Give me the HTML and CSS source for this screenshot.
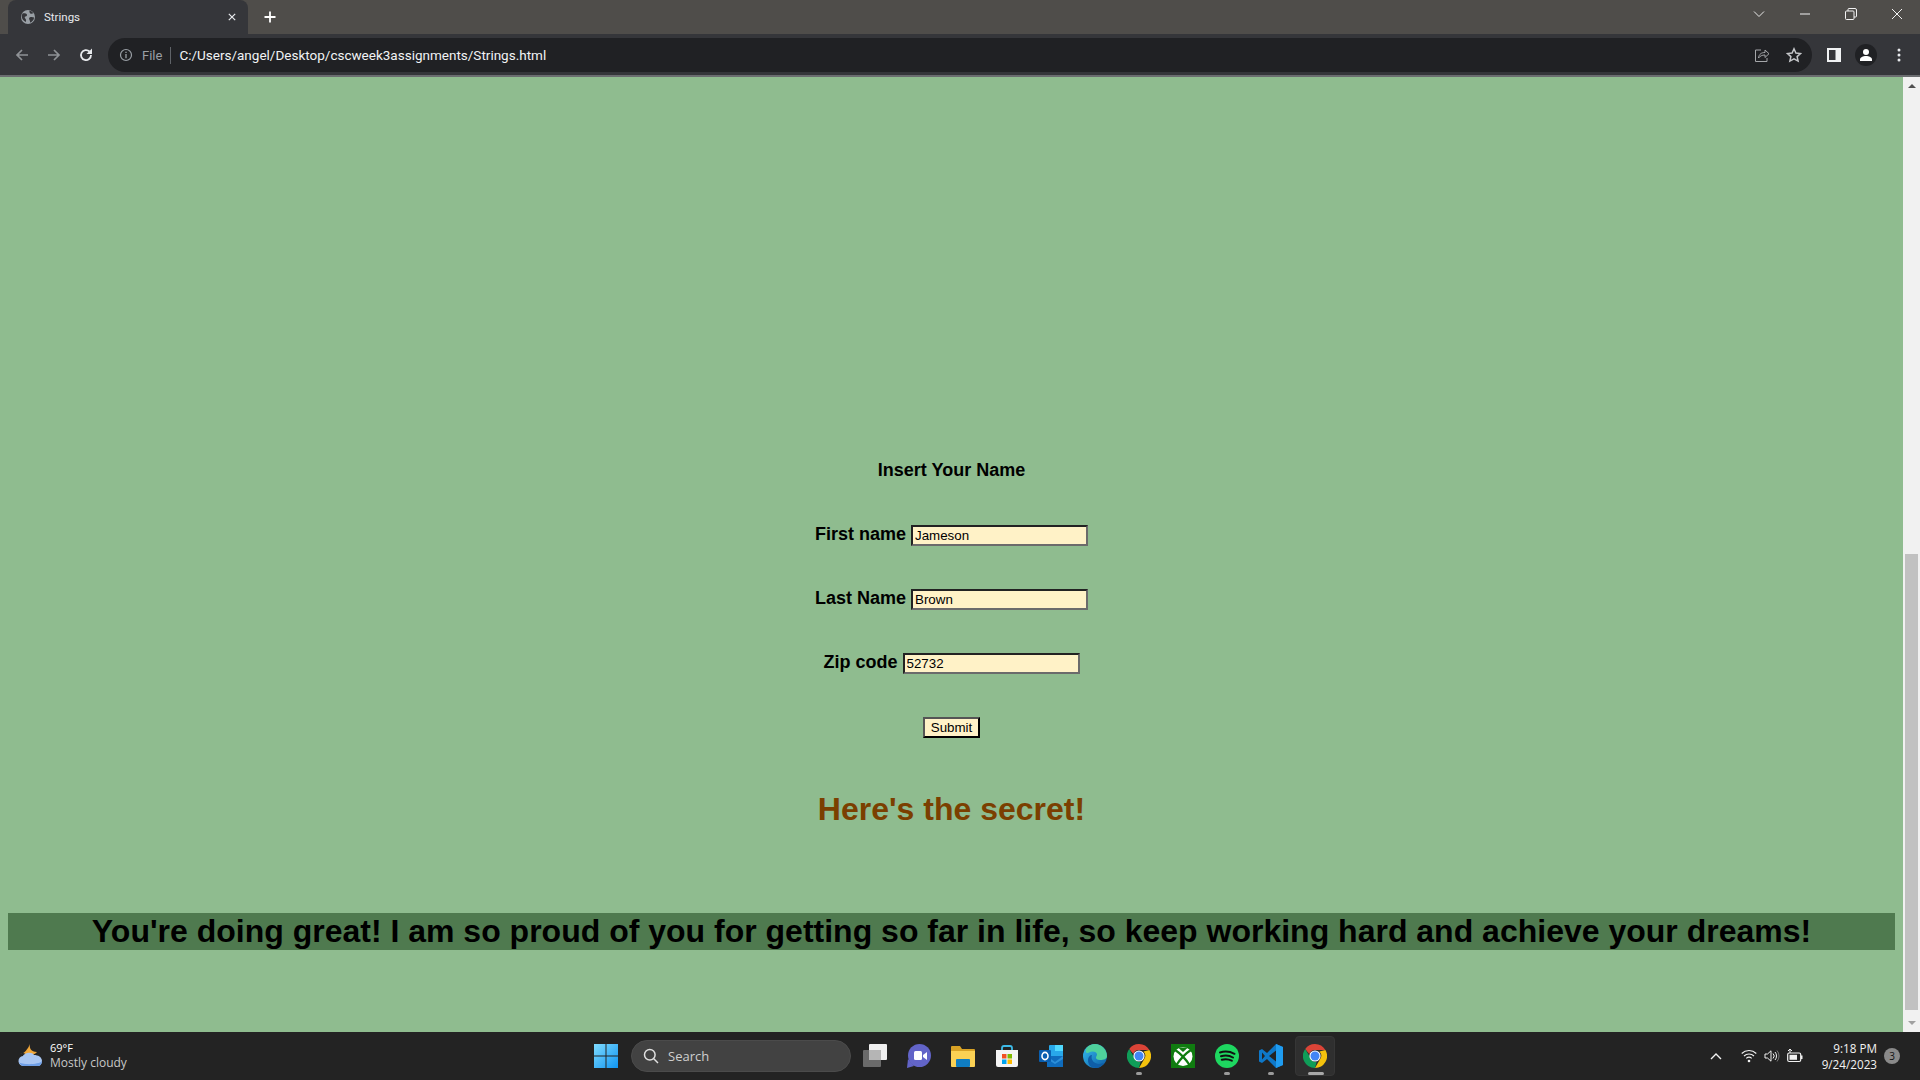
FILE: index.html
```html
<!DOCTYPE html>
<html lang="en">
<head>
<meta charset="utf-8">
<title>Strings</title>
<link rel="stylesheet" href="styles.css">
</head>
<body>
<div class="tabstrip">
  <div class="tab">
    <svg class="favicon" viewBox="0 0 16 16"><circle cx="8" cy="8" r="7" fill="#9aa0a6"/><path d="M2.500 4.500c1.500-.5 3.500-.3 4.300.7.7 1-.2 2-1.300 2.200-1.100.2-.9 1.500-.2 2.200.8.9 1 2 .6 3.300C3.500 12 1.800 10 1.800 7.800c0-1.200.2-2.300.7-3.300zM9.500 1.500c1.700.4 3 1.400 3.800 2.800-.9.500-2.200.6-3 .1-.9-.6-1-1.800-.8-2.900zM9.500 8.500c1.500-.7 3.200-.6 4.600.1-.2 2.300-1.700 4.300-3.900 5.100-.3-1-.2-1.800-.6-2.600-.4-.8-.9-1.800-.1-2.600z" fill="#35363a"/></svg>
    <span class="tab-title">Strings</span>
    <svg class="tab-close" viewBox="0 0 10 10"><path d="M1 1l8 8M9 1l-8 8" stroke="#e8eaed" stroke-width="1.500"/></svg>
  </div>
  <svg class="newtab" viewBox="0 0 12 12"><path d="M6 .5v11M.5 6h11" stroke="#fff" stroke-width="1.800"/></svg>
  <div class="window-controls">
    <svg class="wc wc-chev" viewBox="0 0 12 8"><path d="M1 1.500l5 5 5-5" fill="none" stroke="#e8e8e8" stroke-width="1"/></svg>
    <svg class="wc wc-min" viewBox="0 0 12 2"><path d="M1 1h10" stroke="#f2f2f2" stroke-width="1"/></svg>
    <svg class="wc wc-max" viewBox="0 0 12 12"><path d="M3 3V1.500q0-1 1-1h6q1.500 0 1.500 1.500v6q0 1-1 1H9" fill="none" stroke="#f2f2f2"/><rect x=".5" y="3" width="8.500" height="8.500" rx="1" fill="none" stroke="#f2f2f2"/></svg>
    <svg class="wc wc-close" viewBox="0 0 12 12"><path d="M1 1l10 10M11 1L1 11" stroke="#f2f2f2" stroke-width="1"/></svg>
  </div>
</div>

<div class="toolbar">
  <svg class="nav" viewBox="0 0 16 16"><path d="M14 8H3M8 3L3 8l5 5" fill="none" stroke="#8f9296" stroke-width="1.700"/></svg>
  <svg class="nav" viewBox="0 0 16 16"><path d="M2 8h11M8 3l5 5-5 5" fill="none" stroke="#8f9296" stroke-width="1.700"/></svg>
  <svg class="nav" viewBox="0 0 16 16"><path d="M13 8a5 5 0 1 1-1.500-3.500" fill="none" stroke="#e8eaed" stroke-width="1.800"/><path d="M14 1.500V7H8.500z" fill="#e8eaed"/></svg>
  <div class="omnibox">
    <svg class="info" viewBox="0 0 14 14"><circle cx="7" cy="7" r="5.500" fill="none" stroke="#9aa0a6" stroke-width="1.200"/><path d="M7 6v4.200M7 3.700v1.300" stroke="#9aa0a6" stroke-width="1.300"/></svg>
    <span class="file">File</span>
    <span class="divider"></span>
    <span class="url">C:/Users/angel/Desktop/cscweek3assignments/Strings.html</span>
    <svg class="omni-icon share" viewBox="0 0 16 16"><path d="M7 3H1.500v11.500H13V11" fill="none" stroke="#a5a7aa" stroke-width="1"/><path d="M4.500 11c.5-4 3-5.500 6.500-5.500V3l4 3.700-4 3.800V8c-3 0-5 1-6.500 3z" fill="#202124" stroke="#a5a7aa" stroke-width="1"/></svg>
    <svg class="omni-icon star" viewBox="0 0 16 16"><path d="M8 1.800l1.900 4.200 4.600.5-3.400 3.100 1 4.500L8 11.800l-4.100 2.300 1-4.500L1.500 6.500l4.600-.5z" fill="none" stroke="#c4c6c9" stroke-width="1.500"/></svg>
  </div>
  <svg class="side" viewBox="0 0 14 14"><rect width="14" height="14" fill="#f1f3f4"/><rect x="2" y="2" width="6.500" height="10" fill="#35363a"/></svg>
  <div class="avatar"><svg viewBox="0 0 14 14"><circle cx="7" cy="4" r="3" fill="#fff"/><path d="M1 13v-1.500C1 9.500 4 8 7 8s6 1.500 6 3.500V13z" fill="#fff"/></svg></div>
  <svg class="menu" viewBox="0 0 4 14"><circle cx="2" cy="2" r="1.500" fill="#e8eaed"/><circle cx="2" cy="7" r="1.500" fill="#e8eaed"/><circle cx="2" cy="12" r="1.500" fill="#e8eaed"/></svg>
</div>

<div class="viewport">
  <main class="page">
    <h3 class="form-title">Insert Your Name</h3>
    <form class="name-form">
      <div class="row"><label class="lbl">First name</label> <input class="field" type="text" value="Jameson"></div>
      <div class="row"><label class="lbl">Last Name</label> <input class="field" type="text" value="Brown"></div>
      <div class="row"><label class="lbl">Zip code</label> <input class="field" type="text" value="52732"></div>
      <div class="row"><button class="submit" type="button">Submit</button></div>
    </form>
    <h2 class="secret">Here's the secret!</h2>
    <p class="banner">You're doing great! I am so proud of you for getting so far in life, so keep working hard and achieve your dreams!</p>
  </main>
  <div class="scrollbar">
    <div class="arrow-up"></div>
    <div class="track"><div class="thumb"></div></div>
    <div class="arrow-down"></div>
  </div>
</div>

<footer class="taskbar">
  <div class="weather">
    <svg class="weather-icon" viewBox="0 0 26 26"><path d="M12 1c-1 4 1 8 7 8-2 3-10 5-13 1L2 11c4 0 8-5 10-10z" fill="#f0a73a"/><path d="M6 23a5 5 0 0 1-1-10c1-3 9-5 11-1 4 0 8 2 8 6 0 3-2 5-4 5z" fill="#a9c6f2"/><path d="M1 19c2 3 20 3 23-1 0 3-2 5-4 5H6c-3 0-4-2-5-4z" fill="#6f9fe6"/></svg>
    <div class="weather-text"><div class="temp">69°F</div><div class="cond">Mostly cloudy</div></div>
  </div>
  <div class="tb-center">
    <svg class="tb-icon win" viewBox="0 0 24 24"><defs><linearGradient id="wg" x1="0" y1="0" x2="1" y2="1"><stop offset="0" stop-color="#7fdcff"/><stop offset="1" stop-color="#0f94f0"/></linearGradient></defs><path d="M0 0h11.500v11.500H0zM12.500 0H24v11.500H12.500zM0 12.500h11.500V24H0zM12.500 12.500H24V24H12.500z" fill="url(#wg)"/></svg>
    <div class="search">
      <svg class="search-icon" viewBox="0 0 16 16"><circle cx="6.800" cy="6.800" r="5.300" fill="none" stroke="#e0e0e0" stroke-width="1.500"/><path d="M10.800 10.800L15 15" stroke="#e0e0e0" stroke-width="1.500"/></svg>
      <span class="search-text">Search</span>
    </div>
    <div class="apps">
      <div class="app"><svg class="tb-icon" viewBox="0 0 24 24"><rect x="6" y="0" width="18" height="16" rx="1" fill="#efefef"/><rect x="0" y="6" width="18" height="17" rx="1" fill="#6a6a6a"/><rect x="6" y="6" width="12" height="10" fill="#b5b5b5"/></svg></div>
      <div class="app"><svg class="tb-icon" viewBox="0 0 24 24"><circle cx="12.500" cy="11.500" r="11.500" fill="#6264c8"/><path d="M1 15l-1 9 7-2z" fill="#6264c8"/><rect x="7" y="7" width="8" height="9" rx="1.500" fill="#fff"/><path d="M16 11l4-3v8l-4-3z" fill="#fff"/></svg></div>
      <div class="app"><svg class="tb-icon" viewBox="0 0 24 24"><path d="M0 3q0-1 1-1h8l2 3h12q1 0 1 1v3H0z" fill="#d8a225"/><path d="M0 7h24v15q0 1-1 1H1q-1 0-1-1z" fill="#fbd154"/><rect x="5" y="15" width="14" height="8" rx="1" fill="#0f7dc2"/></svg></div>
      <div class="app"><svg class="tb-icon" viewBox="0 0 24 24"><path d="M7 7V4q0-2 2-2h6q2 0 2 2v3" fill="none" stroke="#3dbbe8" stroke-width="1.800"/><path d="M1 6h22v15q0 2-2 2H3q-2 0-2-2z" fill="#f4f4f4"/><rect x="7" y="10" width="4.500" height="4.500" fill="#f25022"/><rect x="12.500" y="10" width="4.500" height="4.500" fill="#7fba00"/><rect x="7" y="15.500" width="4.500" height="4.500" fill="#00a4ef"/><rect x="12.500" y="15.500" width="4.500" height="4.500" fill="#ffb900"/></svg></div>
      <div class="app"><svg class="tb-icon" viewBox="0 0 24 24"><rect x="10" y="1" width="14" height="13" rx="1" fill="#28a8ea"/><rect x="16" y="1" width="8" height="6" fill="#50d9ff"/><path d="M8 12h16v11H8z" fill="#0f6cbd"/><path d="M8 12l8 6 8-6v3l-8 5-8-5z" fill="#2c8fd9"/><rect x="0" y="6" width="12" height="12" rx="1" fill="#0a5fb0"/><ellipse cx="6" cy="12" rx="3" ry="3.600" fill="none" stroke="#fff" stroke-width="1.600"/></svg></div>
      <div class="app"><svg class="tb-icon" viewBox="0 0 24 24"><defs><linearGradient id="eg" x1="0" y1="0" x2="1" y2="1"><stop offset="0" stop-color="#35c1f1"/><stop offset="1" stop-color="#0c59a4"/></linearGradient></defs><circle cx="12" cy="12" r="12" fill="url(#eg)"/><path d="M12 0c6 0 12 5 12 12 0 3-3 4-7 4-3 0-4-1-4-2.500 0-1 1-2 1-3 0-3-5-4-8-2C3 10.500 2 7 3.500 4 6 1 9 0 12 0z" fill="#4fd19c"/><path d="M13 24c-5 0-8-3-8-8 0-3 2-5 4-5 -2 5 3 9 7 9 2 0 4-1 5-1-2 3-5 5-8 5z" fill="#0f5ea8"/></svg></div>
      <div class="app running"><svg class="tb-icon" viewBox="0 0 24 24"><use href="#chrome"/></svg><i class="dot"></i></div>
      <div class="app"><svg class="tb-icon" viewBox="0 0 24 24"><rect width="24" height="24" fill="#107c10"/><circle cx="12" cy="12.500" r="9.500" fill="#fff"/><path d="M3.500 5.500C8 8.500 15 15.500 19 21.500M20.500 5.500C16 8.500 9 15.500 5 21.500" fill="none" stroke="#107c10" stroke-width="2.200"/><path d="M7 3.500h10L12 8z" fill="#107c10"/></svg></div>
      <div class="app running"><svg class="tb-icon" viewBox="0 0 24 24"><circle cx="12" cy="12" r="12" fill="#1ed760"/><path d="M5 8.500c5-1.500 10-1 14.500 1.300M6 12.300c4-1.200 8.500-.8 12 1.200M6.800 15.700c3.500-1 7-.6 10 1" fill="none" stroke="#111" stroke-width="2" stroke-linecap="round"/></svg><i class="dot"></i></div>
      <div class="app running"><svg class="tb-icon" viewBox="0 0 24 24"><path d="M17 0l7 3v18l-7 3-9-9-5 4-3-1.500V6.500L3 5l5 4z" fill="#0e78c9"/><path d="M17 6.500L10 12l7 5.500z" fill="#232323"/><path d="M17 0l7 3v18l-7 3z" fill="#1f9cf0"/><path d="M3 8.500L6 12l-3 3.500z" fill="#232323"/></svg><i class="dot"></i></div>
      <div class="app active"><svg class="tb-icon" viewBox="0 0 24 24"><g id="chrome"><path d="M12 0a12 12 0 0 1 10.400 6H12a6 6 0 0 0-5.700 4L2.200 5A12 12 0 0 1 12 0z" fill="#db4437"/><path d="M22.400 6A12 12 0 0 1 12 24l5.200-9a6 6 0 0 0-.7-7.500z" fill="#f4c20d"/><path d="M12 24A12 12 0 0 1 2.200 5l5 8.600A6 6 0 0 0 13.500 18z" fill="#0f9d58"/><circle cx="12" cy="12" r="5.600" fill="#fff"/><circle cx="12" cy="12" r="4.500" fill="#4285f4"/></g></svg><i class="bar"></i></div>
    </div>
  </div>
  <div class="tray">
    <svg class="caret" viewBox="0 0 12 7"><path d="M1 6l5-5 5 5" fill="none" stroke="#f2f2f2" stroke-width="1.400"/></svg>
    <svg class="tray-icon" viewBox="0 0 16 14"><path d="M.7 4.500a10.500 10.500 0 0 1 14.600 0M3 7a7.200 7.200 0 0 1 10 0M5.300 9.400a4 4 0 0 1 5.400 0" fill="none" stroke="#f2f2f2" stroke-width="1.100"/><circle cx="8" cy="12" r="1.300" fill="#f2f2f2"/></svg>
    <svg class="tray-icon" viewBox="0 0 16 14"><path d="M1 5h2.500L7 1.800v10.400L3.500 9H1z" fill="none" stroke="#f2f2f2"/><path d="M9 4.500a3.500 3.500 0 0 1 0 5M11 3a6 6 0 0 1 0 8" fill="none" stroke="#f2f2f2"/><path d="M13 1.500a8.500 8.500 0 0 1 0 11" fill="none" stroke="#777"/></svg>
    <svg class="tray-icon" viewBox="0 0 16 14"><rect x=".7" y="4" width="13" height="8.500" rx="1.500" fill="none" stroke="#f2f2f2" stroke-width="1.200"/><rect x="2.500" y="5.800" width="7.500" height="5" fill="#f2f2f2"/><rect x="14" y="6.500" width="1.500" height="3.500" fill="#f2f2f2"/><path d="M3 0v4M1 2l2-2 2 2" fill="none" stroke="#f2f2f2"/></svg>
    <div class="clock"><div>9:18 PM</div><div>9/24/2023</div></div>
    <div class="badge">3</div>
  </div>
</footer>
</body>
</html>
```
FILE: styles.css
```css
* { box-sizing: border-box; }
html, body { margin: 0; height: 100%; overflow: hidden; }
body { display: flex; flex-direction: column; width: 1920px; height: 1080px; font-family: "Liberation Sans", Arial, sans-serif; background: #8fbc8f; }

/* tab strip */
.tabstrip { flex: none; height: 34px; background: #4f4d4a; display: flex; align-items: flex-end; padding-left: 8px; position: relative; }
.tab { width: 240px; height: 34px; background: #35363a; border-radius: 8px 8px 0 0; display: flex; align-items: center; padding: 0 10px 0 12px; }
.favicon { width: 16px; height: 16px; margin-right: 8px; flex: none; }
.tab-title { flex: 1; font: 11.500px "Roboto", "Liberation Sans", sans-serif; color: #e8eaed; }
.tab-close { width: 8px; height: 8px; margin-right: 2px; flex: none; }
.newtab { width: 12px; height: 12px; margin: 0 0 11px 16px; flex: none; }
.window-controls { margin-left: auto; align-self: stretch; display: flex; align-items: flex-start; }
.wc { display: block; flex: none; }
.wc-chev { width: 12px; height: 8px; margin-top: 10px; }
.wc-min { width: 12px; height: 2px; margin: 13px 0 0 34px; }
.wc-max { width: 12px; height: 12px; margin: 8px 0 0 34px; }
.wc-close { width: 12px; height: 12px; margin: 8px 17px 0 34px; }

/* toolbar */
.toolbar { flex: none; height: 43px; background: #35363a; border-bottom: 2px solid #6b6d70; display: flex; align-items: center; padding: 1px 11px 0 14px; }
.nav { width: 16px; height: 16px; margin-right: 16px; flex: none; }
.nav:nth-child(3) { margin-right: 14px; }
.omnibox { flex: none; width: 1704px; height: 34px; background: #202124; border-radius: 17px; display: flex; align-items: center; padding: 0 10px 0 10px; }
.info { width: 14px; height: 14px; flex: none; margin-left: 1px; }
.file { font: 13px "Roboto", "Liberation Sans", sans-serif; color: #9aa0a6; margin-left: 9px; }
.divider { width: 1px; height: 17px; background: #5f6368; margin: 0 8px 0 8px; }
.url { flex: 1; font: 13.500px "Roboto", "Liberation Sans", sans-serif; color: #f1f3f4; }
.omni-icon { width: 16px; height: 16px; flex: none; }
.share { margin-right: 16px; }
.side { width: 14px; height: 14px; flex: none; margin-left: 15px; }
.avatar { width: 22px; height: 22px; border-radius: 50%; background: #202124; display: flex; align-items: center; justify-content: center; margin-left: 14px; flex: none; }
.avatar svg { width: 14px; height: 14px; }
.menu { width: 4px; height: 14px; margin-left: 20px; flex: none; }

/* page */
.viewport { flex: 1; min-height: 0; display: flex; }
.page { flex: 1; min-width: 0; padding: 383px 8px 0; text-align: center; color: #000; overflow: hidden; }
.form-title { font-size: 18px; font-weight: bold; margin: 0; line-height: 21px; }
.name-form { margin: 0; padding-top: 44px; display: flex; flex-direction: column; gap: 43px; align-items: center; }
.row { height: 21px; display: flex; align-items: flex-start; justify-content: center; gap: 5px; }
.lbl { font-size: 18px; font-weight: bold; line-height: 21px; margin-top: -1px; }
.field { width: 177px; height: 21px; padding: 1px 2px; font: 13.33px "Liberation Sans", Arial, sans-serif; color: #000; background: #fff2c7; border: 2px solid; border-color: #222 #6b6b6b #6b6b6b #222; border-radius: 0; outline: none; margin: 0; }
.submit { width: 57px; height: 21px; padding: 0; font: 13.33px "Liberation Sans", Arial, sans-serif; color: #000; background: #fff2c7; border: 2px solid; border-color: #555 #000 #000 #555; border-radius: 0; }
.secret { font-size: 32px; font-weight: bold; color: #7b3f00; margin: 53px 0 0; line-height: 37px; }
.banner { font-size: 32px; font-weight: bold; color: #000; background: #4f7a4f; margin: 85px 0 0; line-height: 37px; white-space: nowrap; }

/* scrollbar */
.scrollbar { flex: none; width: 17px; background: #f1f1f1; display: flex; flex-direction: column; align-items: center; }
.arrow-up { flex: none; margin: 7px 0 4px; width: 0; height: 0; border: 4px solid transparent; border-top: 0; border-bottom: 4px solid #505050; }
.track { flex: 1; width: 13px; padding-top: 462px; padding-bottom: 5px; display: flex; min-height: 0; }
.thumb { flex: 1; background: #c1c1c1; }
.arrow-down { flex: none; margin: 6px 0 7px; width: 0; height: 0; border: 4px solid transparent; border-bottom: 0; border-top: 4px solid #a0a0a0; }

/* taskbar */
.taskbar { flex: none; height: 48px; background: #232323; display: flex; align-items: center; position: relative; color: #fff; font-family: "Open Sans", "Noto Sans", sans-serif; }
.weather { display: flex; align-items: center; padding-left: 18px; width: 593px; flex: none; }
.weather-icon { width: 26px; height: 26px; flex: none; margin-right: 6px; }
.temp { font-size: 11px; line-height: 15px; font-weight: 400; margin-top: -1px; }
.cond { font-size: 12px; line-height: 16px; color: #c8c8c8; }
.tb-center { display: flex; align-items: center; flex: none; }
.tb-icon { width: 24px; height: 24px; display: block; flex: none; }
.win { margin: 0 13px 0 1px; }
.search { width: 220px; height: 32px; border-radius: 16px; background: #424242; border: 1px solid #4b4b4b; display: flex; align-items: center; padding-left: 11px; }
.search-icon { width: 16px; height: 16px; flex: none; }
.search-text { font-size: 13px; color: #cfcfcf; margin-left: 9px; }
.apps { display: flex; margin-left: 2px; }
.app { width: 44px; height: 40px; margin-right: 0; flex: none; display: flex; align-items: center; justify-content: center; position: relative; border-radius: 4px; }
.active { background: #2f2f2f; border: 1px solid #363636; width: 40px; margin-left: 2px; }
.dot { position: absolute; left: 19px; bottom: 1px; width: 6px; height: 3px; border-radius: 2px; background: #9a9a9a; }
.bar { position: absolute; left: 12px; bottom: 0; width: 16px; height: 3px; border-radius: 2px; background: #a8a8a8; }
.tray { margin-left: auto; display: flex; align-items: center; }
.caret { width: 12px; height: 7px; margin-right: 19px; flex: none; }
.tray-icon { width: 16px; height: 14px; margin-right: 7px; flex: none; }
.clock { font-size: 11.700px; line-height: 16px; text-align: right; margin-left: 12px; color: #f2f2f2; }
.badge { width: 16px; height: 16px; border-radius: 50%; background: #8a8a8a; color: #111; font-size: 10px; line-height: 16px; text-align: center; margin: 0 20px 0 7px; }
```
